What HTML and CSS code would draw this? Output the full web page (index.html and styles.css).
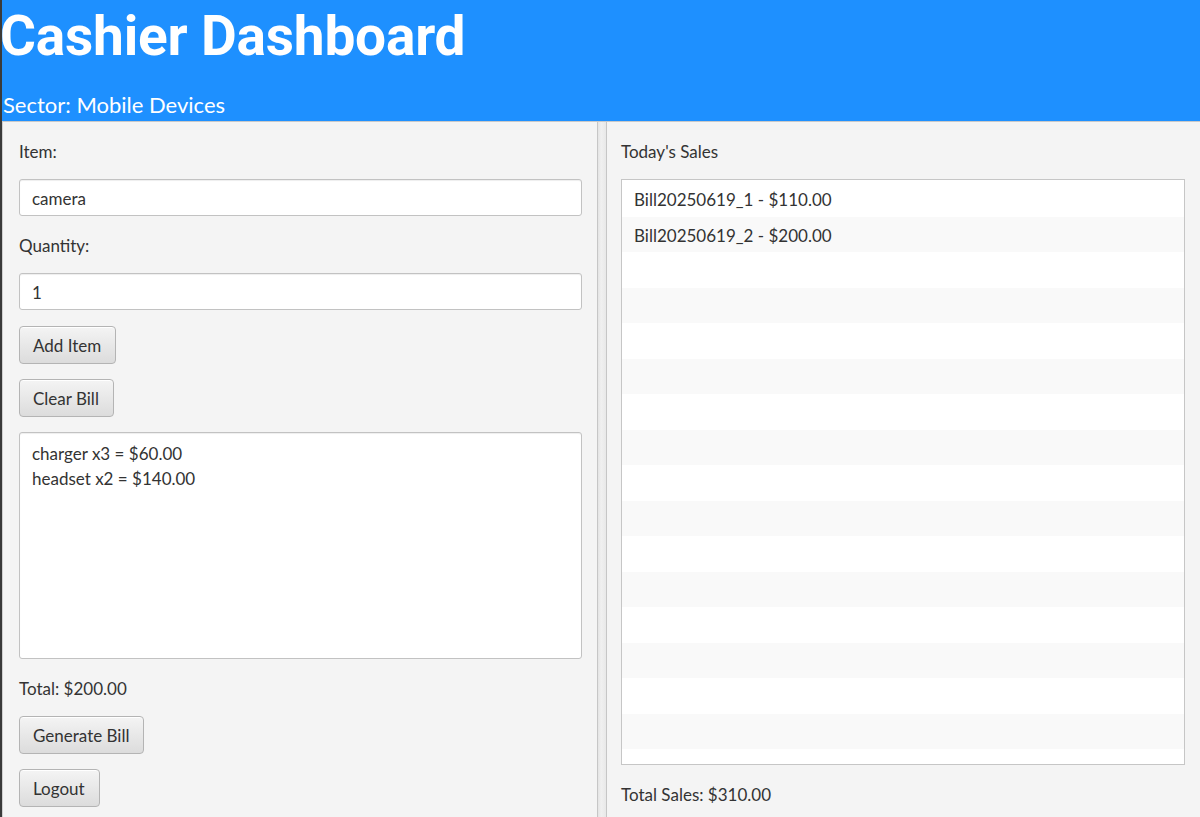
FILE: index.html
```html
<!DOCTYPE html>
<html>
<head>
<meta charset="utf-8">
<title>Cashier Dashboard</title>
<link rel="stylesheet" href="styles.css">
</head>
<body>
<div class="app">
  <header class="header">
    <div class="title">Cashier Dashboard</div>
    <div class="sector">Sector: Mobile Devices</div>
  </header>
  <div class="split">
    <section class="pane left">
      <div class="label">Item:</div>
      <div class="field">camera</div>
      <div class="label">Quantity:</div>
      <div class="field">1</div>
      <div class="btn btn-first">Add Item</div>
      <div class="btn">Clear Bill</div>
      <div class="textarea">
        <div class="line">charger x3 = $60.00</div>
        <div class="line">headset x2 = $140.00</div>
      </div>
      <div class="label">Total: $200.00</div>
      <div class="btn">Generate Bill</div>
      <div class="btn">Logout</div>
    </section>
    <div class="divider"></div>
    <section class="pane right">
      <div class="label">Today's Sales</div>
      <div class="list">
        <div class="row">Bill20250619_1 - $110.00</div>
        <div class="row">Bill20250619_2 - $200.00</div>
        <div class="row"></div>
        <div class="row"></div>
        <div class="row"></div>
        <div class="row"></div>
        <div class="row"></div>
        <div class="row"></div>
        <div class="row"></div>
        <div class="row"></div>
        <div class="row"></div>
        <div class="row"></div>
        <div class="row"></div>
        <div class="row"></div>
        <div class="row"></div>
        <div class="row"></div>
        <div class="row"></div>
      </div>
      <div class="label">Total Sales: $310.00</div>
    </section>
  </div>
</div>
</body>
</html>
```
FILE: styles.css
```css
html, body {
  margin: 0;
  padding: 0;
  background: #f4f4f4;
}
body {
  font-family: Lato, "Open Sans", sans-serif;
  color: #333333;
  font-size: 17px;
}
.app {
  width: 1200px;
  height: 817px;
  overflow: hidden;
  box-sizing: border-box;
  border-left: 2px solid #3a3a3a;
  display: flex;
  flex-direction: column;
}
.header {
  height: 121px;
  flex: none;
  background: #1e90ff;
  color: #ffffff;
  display: flex;
  flex-direction: column;
  box-sizing: border-box;
}
.title {
  font-family: Roboto, "Open Sans", sans-serif;
  font-size: 55px;
  font-weight: 700;
  line-height: 72px;
  margin-left: -2px;
  letter-spacing: -0.2px;
  white-space: nowrap;
}
.sector {
  margin-top: auto;
  font-size: 22px;
  line-height: 28px;
  padding-bottom: 2px;
  padding-left: 1px;
  white-space: nowrap;
}
.split {
  flex: 1;
  display: flex;
  border-top: 1px solid #c9c9c9;
  border-left: 1px solid #d0d0d0;
  min-height: 0;
}
.pane {
  display: flex;
  flex-direction: column;
  gap: 15px;
  padding-top: 15px;
  box-sizing: border-box;
}
.left {
  width: 594px;
  padding-left: 16px;
  padding-right: 15px;
  flex: none;
}
.right {
  flex: 1;
  padding-left: 14px;
  padding-right: 15px;
}
.divider {
  width: 10px;
  flex: none;
  box-sizing: border-box;
  border-left: 1px solid #c6c6c6;
  border-right: 1px solid #c6c6c6;
  background: linear-gradient(to right, #e4e4e4, #f0f0f0 40%, #e8e8e8);
}
.label {
  height: 25px;
  padding-top: 2px;
  line-height: 25px;
  flex: none;
  white-space: nowrap;
}
.field {
  height: 37px;
  flex: none;
  box-sizing: border-box;
  border: 1px solid #c2c2c2;
  border-radius: 3px;
  background: #ffffff;
  box-shadow: inset 0 1px 1px rgba(0, 0, 0, 0.07);
  padding: 2px 12px 0;
  line-height: 33px;
}
.btn {
  align-self: flex-start;
  height: 38px;
  flex: none;
  box-sizing: border-box;
  border: 1px solid #b4b4b4;
  border-radius: 4px;
  background: linear-gradient(to bottom, #f4f4f4, #dcdcdc);
  box-shadow: inset 0 1px 0 #ffffff;
  padding: 1px 14px 0 13px;
  line-height: 35px;
  white-space: nowrap;
}
.btn-first {
  margin-top: 1px;
}
.textarea {
  height: 227px;
  flex: none;
  box-sizing: border-box;
  border: 1px solid #c2c2c2;
  border-radius: 3px;
  background: #ffffff;
  box-shadow: inset 0 1px 1px rgba(0, 0, 0, 0.07);
  padding: 8px 12px;
}
.line {
  line-height: 25px;
  white-space: nowrap;
}
.list {
  height: 586px;
  flex: none;
  box-sizing: border-box;
  border: 1px solid #c6c6c6;
  background: #ffffff;
  padding: 1px 0 0;
  overflow: hidden;
}
.row {
  height: 35.5px;
  line-height: 37px;
  padding: 0 12px;
  background: #ffffff;
  overflow: hidden;
  white-space: nowrap;
}
.row:nth-child(even) {
  background: #f9f9f9;
}
```
